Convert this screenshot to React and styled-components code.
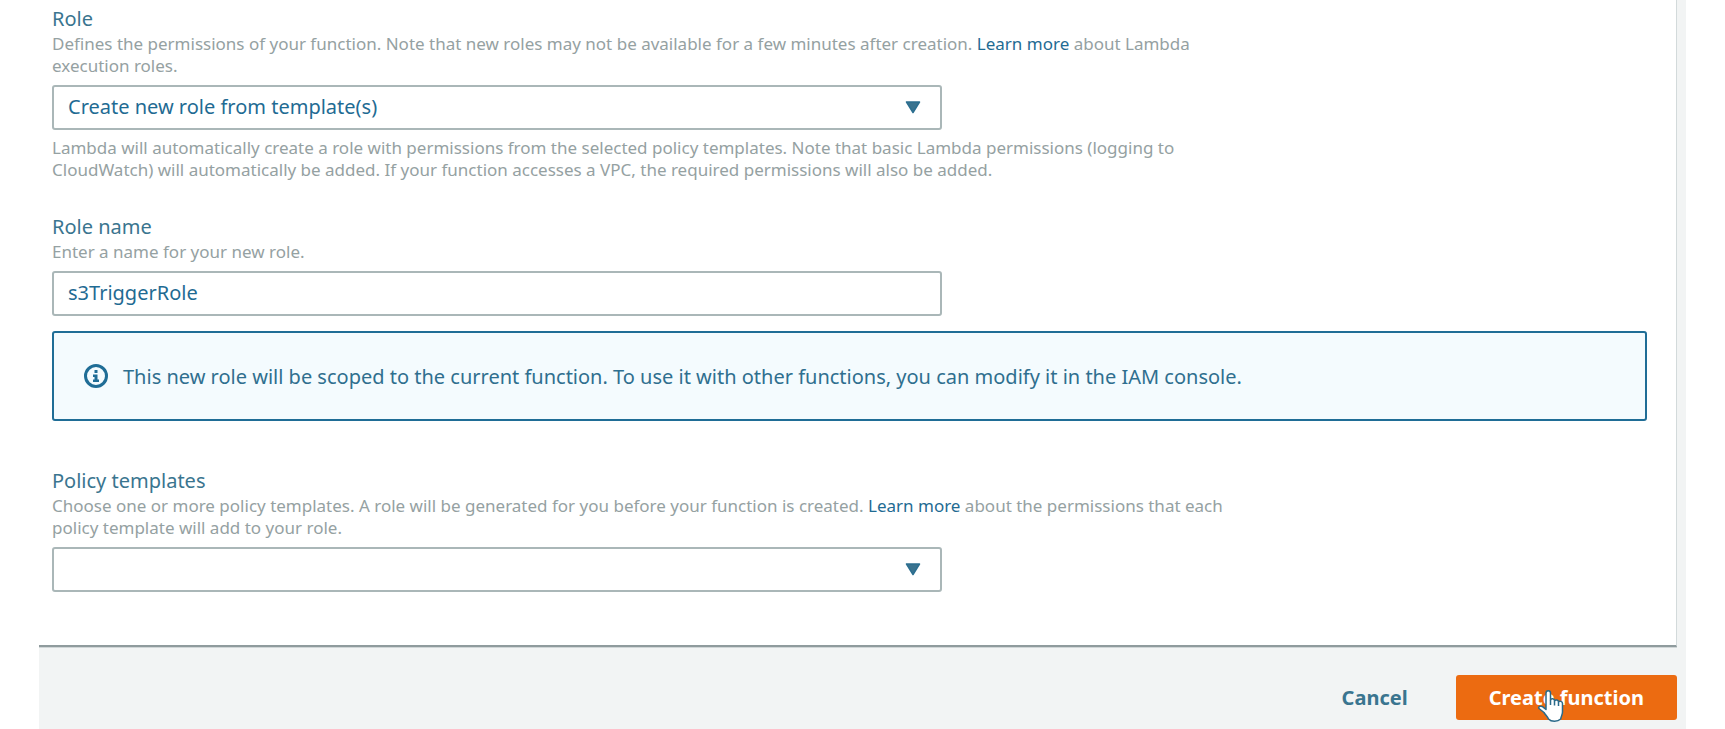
import React from 'react';
import styled, { createGlobalStyle } from 'styled-components';

const GlobalStyle = createGlobalStyle`
  * { box-sizing: border-box; }
  body {
    margin: 0;
    background: #fff;
    color: #2f6f8f;
    font: 20px/29px "Noto Sans", "Open Sans", sans-serif;
  }
`;

const Page = styled.main`
  margin: 0 39px;
  padding-right: 9px;
  background: #f2f4f4;
`;

const Panel = styled.section`
  display: flex;
  flex-direction: column;
  padding: 4px 29px 53px 13px;
  background: #fff;
  border-right: 1px solid #d3dadb;
  border-bottom: 2px solid #8f9b9d;
  box-shadow: 0 1px 0 #d0d6d7;
`;

const Field = styled.div`
  display: flex;
  flex-direction: column;
  margin-top: ${({ $gap = 0 }) => $gap}px;
`;

const Label = styled.label`
  align-self: flex-start;
  color: #3a758f;
`;

const Hint = styled.p`
  max-width: 1200px;
  margin: ${({ $below }) => ($below ? '7px 0 0' : '0 0 8px')};
  color: #95a1a2;
  font-size: 17px;
  line-height: 22px;
`;

const Link = styled.a`
  color: #1f6b93;
  text-decoration: none;
`;

const Control = styled.input`
  appearance: none;
  width: 100%;
  height: 45px;
  padding: 0 14px 2px;
  border: 2px solid #aab7b8;
  border-radius: 3px;
  outline: none;
  background: #fff;
  color: #1f6b93;
  font: inherit;
`;

const ControlBox = styled.div`
  position: relative;
  display: flex;
  max-width: 890px;
`;

const Caret = styled.svg`
  position: absolute;
  top: 16px;
  right: 21px;
  pointer-events: none;
`;

const Alert = styled.div`
  display: flex;
  align-items: center;
  gap: 15px;
  height: 90px;
  margin-top: 15px;
  padding: 0 30px;
  border: 2px solid #1f6d96;
  border-radius: 3px;
  background: #f4fbfe;
`;

const Footer = styled.footer`
  display: flex;
  justify-content: flex-end;
  gap: 15px;
  padding: 28px 0 9px;
`;

const Button = styled.button`
  position: relative;
  height: 45px;
  padding: 0 33px;
  border: 0;
  border-radius: 3px;
  background: ${({ $primary }) => ($primary ? '#ec6b11' : 'transparent')};
  color: ${({ $primary }) => ($primary ? '#fff' : '#3a758f')};
  font: inherit;
  font-weight: 700;
  cursor: pointer;
`;

const Pointer = styled.svg`
  position: absolute;
  top: 15px;
  left: 82px;
  pointer-events: none;
`;

function SelectField({ id, options }) {
  return (
    <ControlBox>
      <Control as="select" id={id}>
        {options.map((text) => (
          <option key={text}>{text}</option>
        ))}
      </Control>
      <Caret width="16" height="13" viewBox="0 0 16 13" aria-hidden="true">
        <path d="M1.500 1h13L8 11.500z" fill="#3a738f" stroke="#2c6f90" strokeWidth="1.500" strokeLinejoin="round" />
      </Caret>
    </ControlBox>
  );
}

function InfoIcon() {
  return (
    <svg width="24" height="24" viewBox="0 0 24 24" fill="none" aria-hidden="true">
      <circle cx="12" cy="12" r="10.5" stroke="#1f6d96" strokeWidth="3" />
      <path d="M10.500 6h3v3h-3zM9 10.500h4.500v5H15V18H9v-2.500h1.500V13H9z" fill="#1f6d96" />
    </svg>
  );
}

export default function App() {
  return (
    <>
      <GlobalStyle />
      <Page>
        <Panel>
          <Field>
            <Label htmlFor="role">Role</Label>
            <Hint>
              Defines the permissions of your function. Note that new roles may not be available for a few
              minutes after creation. <Link href="#roles">Learn more</Link> about Lambda execution roles.
            </Hint>
            <SelectField id="role" options={['Create new role from template(s)']} />
            <Hint $below>
              Lambda will automatically create a role with permissions from the selected policy templates. Note
              that basic Lambda permissions (logging to CloudWatch) will automatically be added. If your
              function accesses a VPC, the required permissions will also be added.
            </Hint>
          </Field>
          <Field $gap={31}>
            <Label htmlFor="role-name">Role name</Label>
            <Hint>Enter a name for your new role.</Hint>
            <ControlBox>
              <Control id="role-name" type="text" defaultValue="s3TriggerRole" />
            </ControlBox>
          </Field>
          <Alert>
            <InfoIcon />
            <span>
              This new role will be scoped to the current function. To use it with other functions, you can
              modify it in the IAM console.
            </span>
          </Alert>
          <Field $gap={45}>
            <Label htmlFor="policies">Policy templates</Label>
            <Hint>
              Choose one or more policy templates. A role will be generated for you before your function is
              created. <Link href="#policies">Learn more</Link> about the permissions that each policy template
              will add to your role.
            </Hint>
            <SelectField id="policies" options={['']} />
          </Field>
        </Panel>
        <Footer>
          <Button type="button">Cancel</Button>
          <Button type="submit" $primary>
            Create function
            <Pointer width="26" height="33" viewBox="0 0 26 33" aria-hidden="true">
              <path
                d="M8 19.500V3c0-3 4.500-3 4.500 0v7c.8-1.800 4-1.500 4 .8 1-1.500 4-1 4 1 1-1.200 4-.6 4 1.800V22c0 3-1.500 4-1.800 7-3 3-9.500 3-12.200 0-.8-2.500-3-4-4.500-6.500L1 18.500c-1-2 1.500-3 3.500-1.800z"
                fill="#fff"
                stroke="#2a6a8a"
                strokeWidth="1.500"
                strokeLinejoin="round"
              />
              <path d="M12.500 10v5M16.500 11v4.500M20.500 12v4" stroke="#2a6a8a" strokeWidth="1.500" />
            </Pointer>
          </Button>
        </Footer>
      </Page>
    </>
  );
}
